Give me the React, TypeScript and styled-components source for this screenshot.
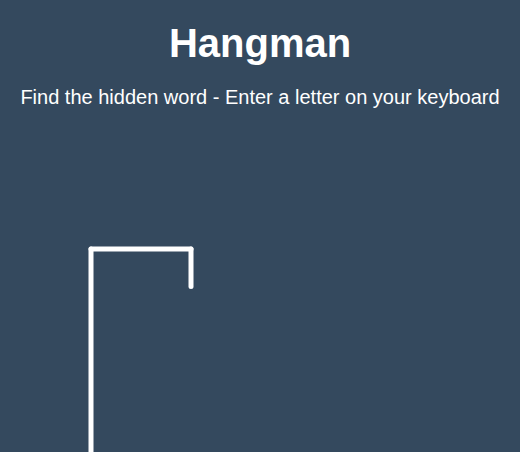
import React from "react";
import styled, { createGlobalStyle } from "styled-components";

const GlobalStyle = createGlobalStyle`
  * { box-sizing: border-box; }
  html, body {
    margin: 0;
    padding: 0;
    background-color: #34495e;
    overflow: hidden;
  }
  body {
    color: #fff;
    font-family: "Liberation Sans", Arial, sans-serif;
  }
`;

const Page = styled.div`
  display: flex;
  flex-direction: column;
  align-items: center;
  height: 452px;
  overflow: hidden;
`;

const Title = styled.h1`
  margin: 21px 0 0;
  font-size: 40px;
  font-weight: bold;
  line-height: normal;
`;

const Subtitle = styled.p`
  margin: 20px 0 0;
  font-size: 20px;
  line-height: normal;
`;

const Stage = styled.div`
  flex-shrink: 0;
  width: 562.5px;
  height: 437.5px;
  margin-top: 90px;
  padding: 25px 37.5px;
  position: relative;
`;

const Figure = styled.svg`
  display: block;
  fill: transparent;
  stroke: #fff;
  stroke-width: 4px;
  stroke-linecap: round;
`;

export default function App() {
  return (
    <>
      <GlobalStyle />
      <Page>
        <Title>Hangman</Title>
        <Subtitle>Find the hidden word - Enter a letter on your keyboard</Subtitle>
        <Stage>
          <Figure width={250} height={312.5} viewBox="0 0 200 250">
            <line x1="60" y1="20" x2="140" y2="20" />
            <line x1="140" y1="20" x2="140" y2="50" />
            <line x1="60" y1="20" x2="60" y2="230" />
            <line x1="20" y1="230" x2="100" y2="230" />
          </Figure>
        </Stage>
      </Page>
    </>
  );
}
